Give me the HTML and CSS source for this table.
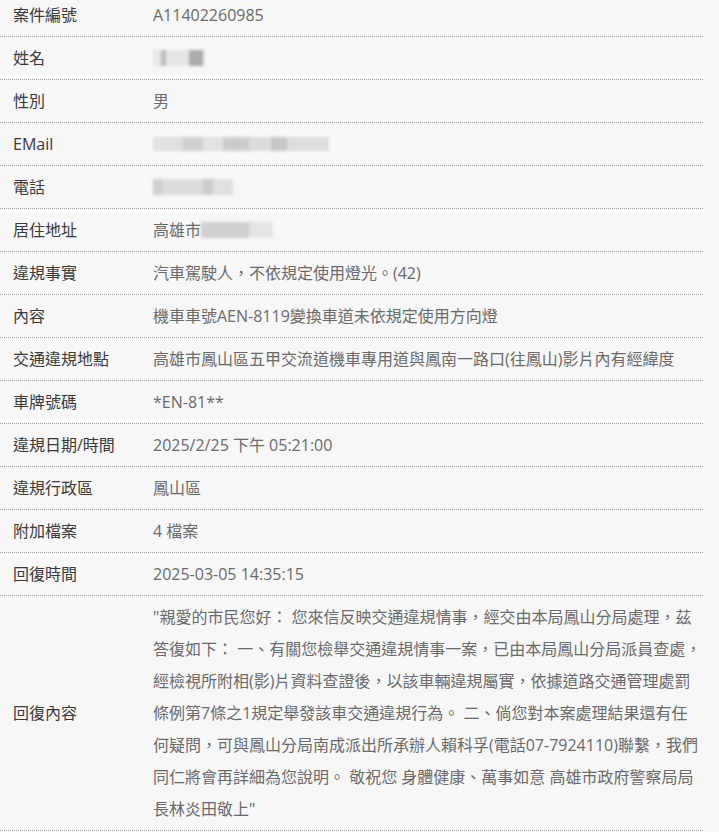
FILE: index.html
```html
<!DOCTYPE html>
<html lang="zh-Hant">
<head>
<meta charset="utf-8">
<title>案件明細</title>
<link rel="stylesheet" href="styles.css">
</head>
<body>
<div class="detail">
  <div class="row"><div class="label">案件編號</div><div class="value">A11402260985</div></div>
  <div class="row"><div class="label">姓名</div><div class="value"><span class="blur blur-name"></span></div></div>
  <div class="row"><div class="label">性別</div><div class="value">男</div></div>
  <div class="row"><div class="label">EMail</div><div class="value"><span class="blur blur-mail"></span></div></div>
  <div class="row"><div class="label">電話</div><div class="value"><span class="blur blur-phone"></span></div></div>
  <div class="row"><div class="label">居住地址</div><div class="value">高雄市<span class="blur blur-addr"></span></div></div>
  <div class="row"><div class="label">違規事實</div><div class="value">汽車駕駛人，不依規定使用燈光。(42)</div></div>
  <div class="row"><div class="label">內容</div><div class="value">機車車號AEN-8119變換車道未依規定使用方向燈</div></div>
  <div class="row"><div class="label">交通違規地點</div><div class="value">高雄市鳳山區五甲交流道機車專用道與鳳南一路口(往鳳山)影片內有經緯度</div></div>
  <div class="row"><div class="label">車牌號碼</div><div class="value">*EN-81**</div></div>
  <div class="row"><div class="label">違規日期/時間</div><div class="value">2025/2/25 下午 05:21:00</div></div>
  <div class="row"><div class="label">違規行政區</div><div class="value">鳳山區</div></div>
  <div class="row"><div class="label">附加檔案</div><div class="value">4 檔案</div></div>
  <div class="row"><div class="label">回復時間</div><div class="value">2025-03-05 14:35:15</div></div>
  <div class="row"><div class="label">回復內容</div><div class="value">"親愛的市民您好： 您來信反映交通違規情事，經交由本局鳳山分局處理，茲答復如下： 一、有關您檢舉交通違規情事一案，已由本局鳳山分局派員查處，經檢視所附相(影)片資料查證後，以該車輛違規屬實，依據道路交通管理處罰條例第7條之1規定舉發該車交通違規行為。 二、倘您對本案處理結果還有任何疑問，可與鳳山分局南成派出所承辦人賴科孚(電話07-7924110)聯繫，我們同仁將會再詳細為您說明。 敬祝您 身體健康、萬事如意 高雄市政府警察局局長林炎田敬上"</div></div>
</div>
</body>
</html>
```

FILE: styles.css
```css
html, body {
  margin: 0;
  padding: 0;
  background: #f7f7f7;
}

body {
  font-family: "Open Sans", "Noto Sans CJK TC", sans-serif;
  font-size: 16px;
}

.detail {
  width: 703px;
  margin-top: -6px;
}

.row {
  display: grid;
  grid-template-columns: 143px 1fr;
  border-bottom: 1px dotted #a0a0a0;
}

.label {
  padding: 5px 0 5px 13px;
  line-height: 32px;
  color: #3a3a3a;
  align-self: center;
}

.value {
  padding: 5px 0 5px 10px;
  line-height: 32px;
  color: #6a6a6a;
  word-break: break-all;
}

.blur {
  display: inline-block;
  vertical-align: middle;
  filter: blur(1.5px);
  position: relative;
  top: -2px;
}

.blur-name {
  width: 52px;
  height: 16px;
  background: linear-gradient(90deg, #e8e8e8 0 8px, #bdbdbd 8px 13px, #e6e6e6 13px 36px, #ababab 36px 50px, #eaeaea 50px);
}

.blur-mail {
  width: 176px;
  height: 14px;
  background: linear-gradient(90deg, #e0e0e0 0 30px, #d0d0d0 30px 50px, #e2e2e2 50px 70px, #cbcbcb 70px 96px, #dcdcdc 96px 118px, #c6c6c6 118px 134px, #dedede 134px 176px);
}

.blur-phone {
  width: 80px;
  height: 16px;
  background: linear-gradient(90deg, #d0d0d0 0 10px, #dcdcdc 10px 50px, #cbcbcb 50px 60px, #e0e0e0 60px 80px);
}

.blur-addr {
  width: 72px;
  height: 16px;
  background: linear-gradient(90deg, #cfcfcf 0 48px, #e4e4e4 48px 72px);
}
```
